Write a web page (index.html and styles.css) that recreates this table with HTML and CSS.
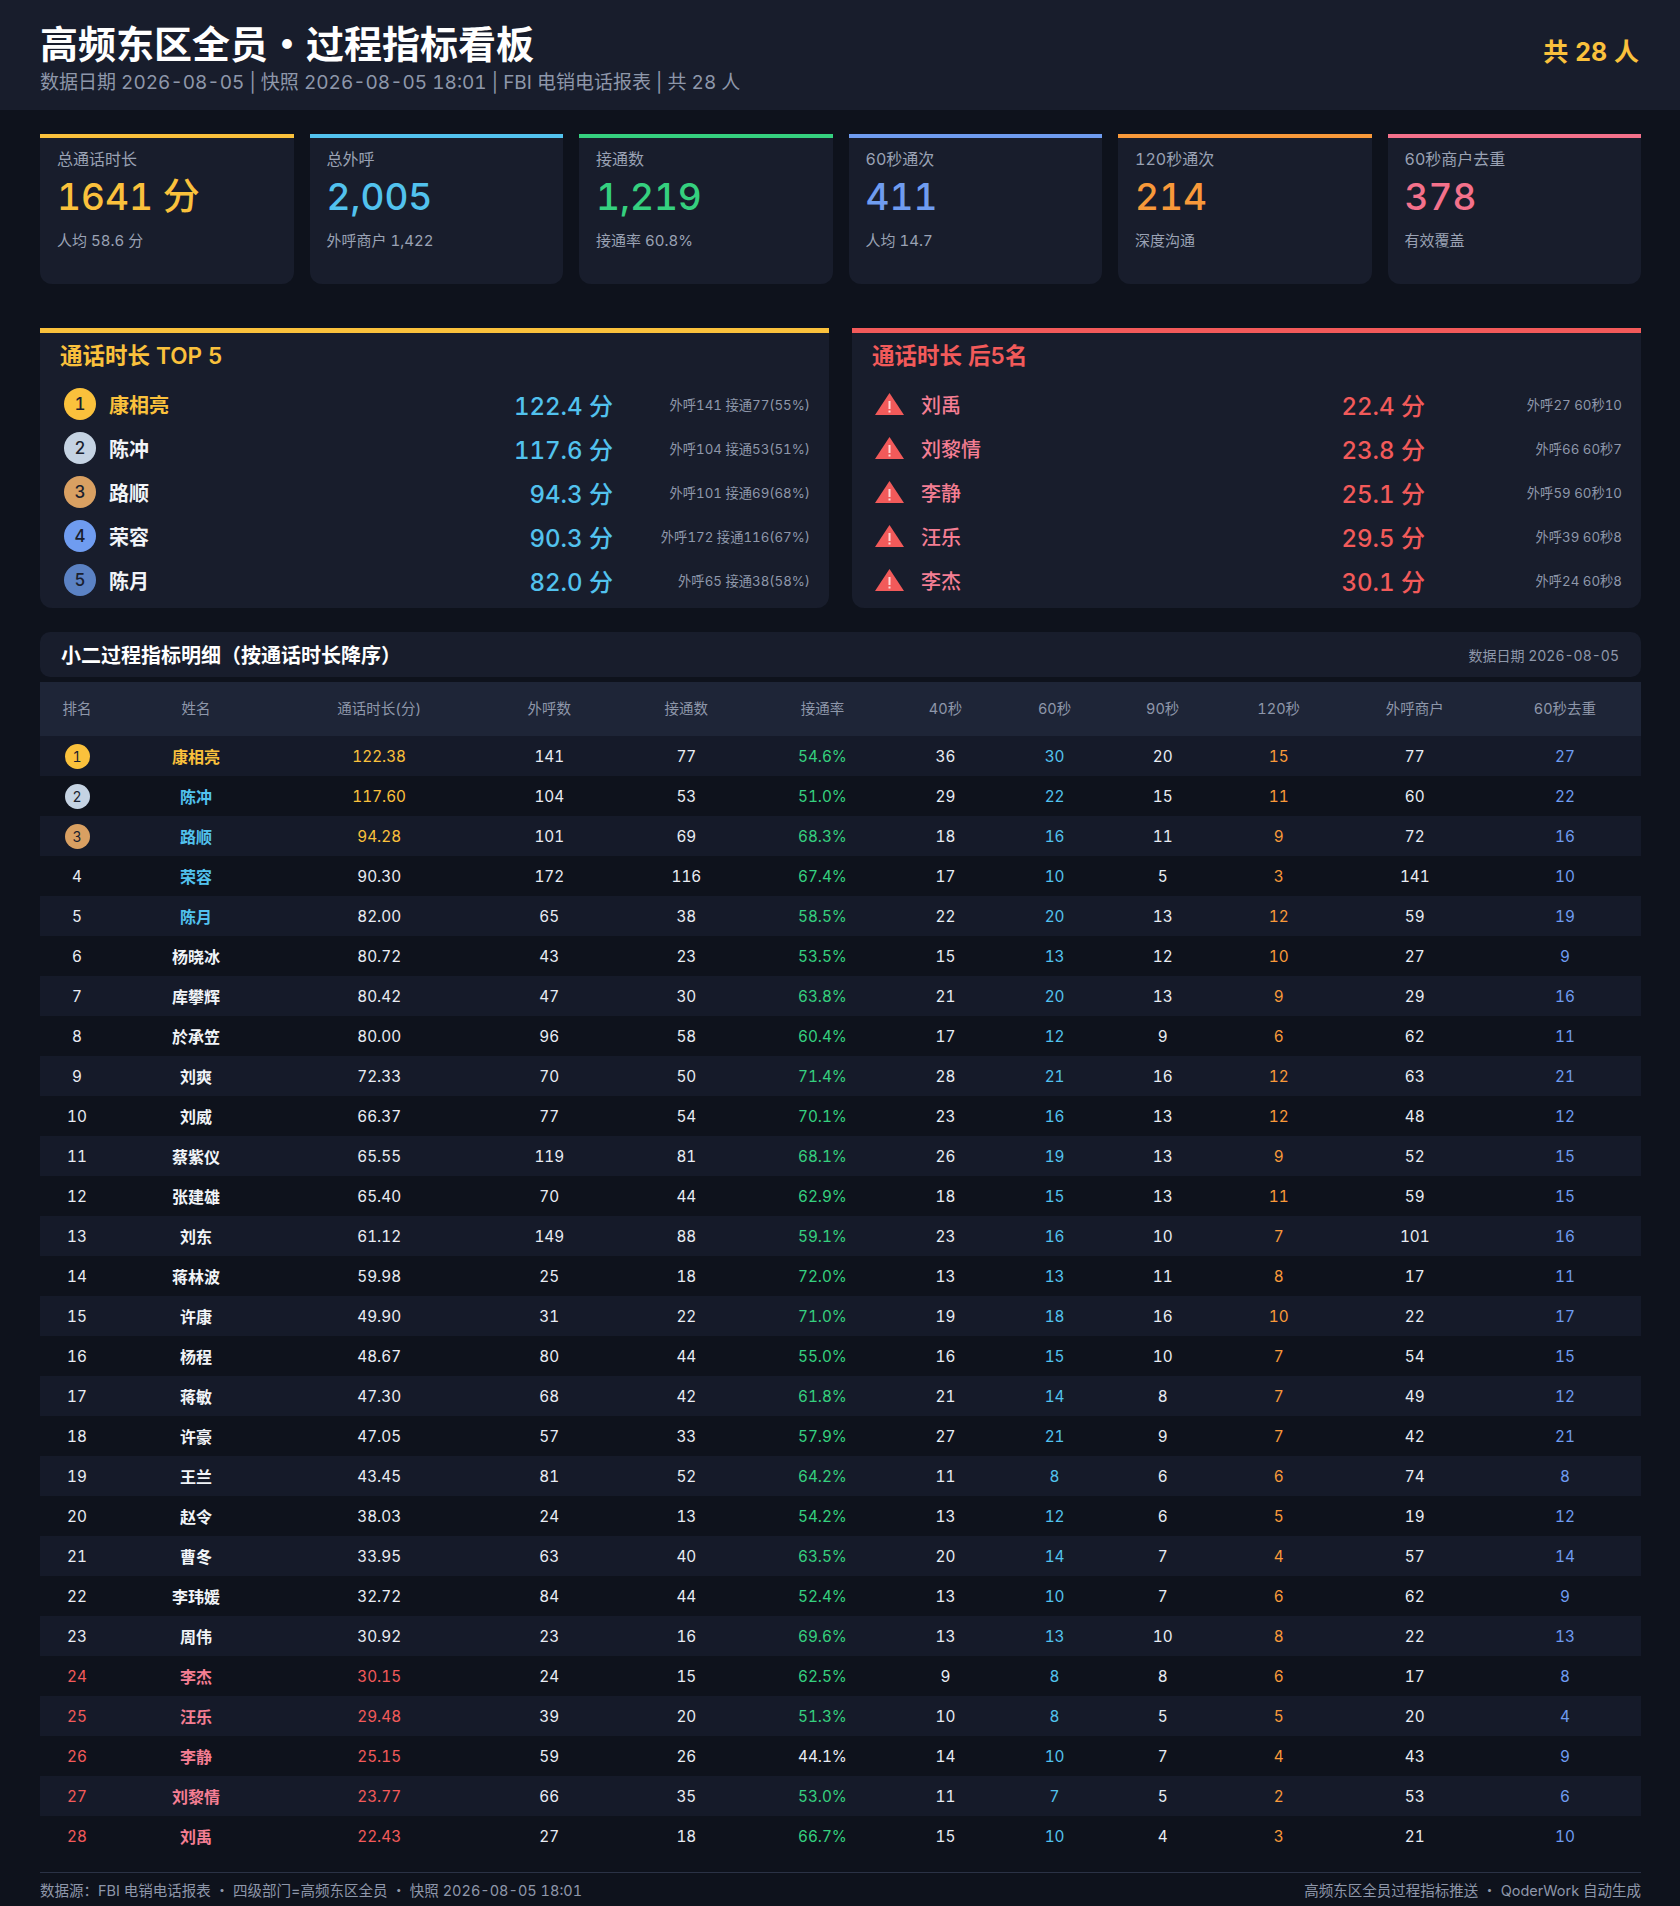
FILE: index.html
```html
<!DOCTYPE html>
<html lang="zh-CN">
<head>
<meta charset="utf-8">
<title>高频东区全员・过程指标看板</title>
<link rel="stylesheet" href="styles.css">
</head>
<body>
<header class="top">
  <div class="top-left">
    <h1 class="title">高频东区全员・过程指标看板</h1>
    <div class="subtitle">数据日期 2026-08-05 | 快照 2026-08-05 18:01 | FBI 电销电话报表 | 共 28 人</div>
  </div>
  <div class="total">共 28 人</div>
</header>

<main class="main">
  <section class="kpis">
    <div class="kpi k-yellow"><div class="kpi-label">总通话时长</div><div class="kpi-value">1641 分</div><div class="kpi-sub">人均 58.6 分</div></div>
    <div class="kpi k-sky"><div class="kpi-label">总外呼</div><div class="kpi-value">2,005</div><div class="kpi-sub">外呼商户 1,422</div></div>
    <div class="kpi k-green"><div class="kpi-label">接通数</div><div class="kpi-value">1,219</div><div class="kpi-sub">接通率 60.8%</div></div>
    <div class="kpi k-blue"><div class="kpi-label">60秒通次</div><div class="kpi-value">411</div><div class="kpi-sub">人均 14.7</div></div>
    <div class="kpi k-orange"><div class="kpi-label">120秒通次</div><div class="kpi-value">214</div><div class="kpi-sub">深度沟通</div></div>
    <div class="kpi k-pink"><div class="kpi-label">60秒商户去重</div><div class="kpi-value">378</div><div class="kpi-sub">有效覆盖</div></div>
  </section>

  <section class="panels">
    <div class="panel panel-top">
      <h2 class="panel-title">通话时长 TOP 5</h2>
      <div class="prow"><span class="medal m1">1</span><span class="pname gold">康相亮</span><span class="pval">122.4 分</span><span class="pdet">外呼141 接通77(55%)</span></div>
      <div class="prow"><span class="medal m2">2</span><span class="pname">陈冲</span><span class="pval">117.6 分</span><span class="pdet">外呼104 接通53(51%)</span></div>
      <div class="prow"><span class="medal m3">3</span><span class="pname">路顺</span><span class="pval">94.3 分</span><span class="pdet">外呼101 接通69(68%)</span></div>
      <div class="prow"><span class="medal m4">4</span><span class="pname">荣容</span><span class="pval">90.3 分</span><span class="pdet">外呼172 接通116(67%)</span></div>
      <div class="prow"><span class="medal m5">5</span><span class="pname">陈月</span><span class="pval">82.0 分</span><span class="pdet">外呼65 接通38(58%)</span></div>
    </div>
    <div class="panel panel-bottom">
      <h2 class="panel-title">通话时长 后5名</h2>
      <div class="prow"><svg class="warn" viewBox="0 0 29 22"><polygon points="14.5,0 29,22 0,22" fill="#f25a5a"/><rect x="13.5" y="8" width="2" height="8" fill="#ffd9d9"/><rect x="13.5" y="17.5" width="2" height="2" fill="#ffd9d9"/></svg><span class="pname pink">刘禹</span><span class="pval red">22.4 分</span><span class="pdet">外呼27 60秒10</span></div>
      <div class="prow"><svg class="warn" viewBox="0 0 29 22"><polygon points="14.5,0 29,22 0,22" fill="#f25a5a"/><rect x="13.5" y="8" width="2" height="8" fill="#ffd9d9"/><rect x="13.5" y="17.5" width="2" height="2" fill="#ffd9d9"/></svg><span class="pname pink">刘黎情</span><span class="pval red">23.8 分</span><span class="pdet">外呼66 60秒7</span></div>
      <div class="prow"><svg class="warn" viewBox="0 0 29 22"><polygon points="14.5,0 29,22 0,22" fill="#f25a5a"/><rect x="13.5" y="8" width="2" height="8" fill="#ffd9d9"/><rect x="13.5" y="17.5" width="2" height="2" fill="#ffd9d9"/></svg><span class="pname pink">李静</span><span class="pval red">25.1 分</span><span class="pdet">外呼59 60秒10</span></div>
      <div class="prow"><svg class="warn" viewBox="0 0 29 22"><polygon points="14.5,0 29,22 0,22" fill="#f25a5a"/><rect x="13.5" y="8" width="2" height="8" fill="#ffd9d9"/><rect x="13.5" y="17.5" width="2" height="2" fill="#ffd9d9"/></svg><span class="pname pink">汪乐</span><span class="pval red">29.5 分</span><span class="pdet">外呼39 60秒8</span></div>
      <div class="prow"><svg class="warn" viewBox="0 0 29 22"><polygon points="14.5,0 29,22 0,22" fill="#f25a5a"/><rect x="13.5" y="8" width="2" height="8" fill="#ffd9d9"/><rect x="13.5" y="17.5" width="2" height="2" fill="#ffd9d9"/></svg><span class="pname pink">李杰</span><span class="pval red">30.1 分</span><span class="pdet">外呼24 60秒8</span></div>
    </div>
  </section>

  <section class="detail">
    <div class="detail-head">
      <h2 class="detail-title">小二过程指标明细（按通话时长降序）</h2>
      <span class="detail-date">数据日期 2026-08-05</span>
    </div>
    <table class="grid">
      <colgroup>
        <col class="w-rank"><col class="w-name"><col class="w-dur"><col class="w-out"><col class="w-con"><col class="w-rate"><col class="w-s40"><col class="w-s60"><col class="w-s90"><col class="w-s120"><col class="w-mer"><col class="w-dedup">
      </colgroup>
      <thead>
        <tr><th>排名</th><th>姓名</th><th>通话时长(分)</th><th>外呼数</th><th>接通数</th><th>接通率</th><th>40秒</th><th>60秒</th><th>90秒</th><th>120秒</th><th>外呼商户</th><th>60秒去重</th></tr>
      </thead>
      <tbody>
        <tr><td><span class="badge b1">1</span></td><td class="nm gold">康相亮</td><td class="gold">122.38</td><td>141</td><td>77</td><td class="grn">54.6%</td><td>36</td><td class="sky">30</td><td>20</td><td class="org">15</td><td>77</td><td class="blu">27</td></tr>
        <tr><td><span class="badge b2">2</span></td><td class="nm sky">陈冲</td><td class="gold">117.60</td><td>104</td><td>53</td><td class="grn">51.0%</td><td>29</td><td class="sky">22</td><td>15</td><td class="org">11</td><td>60</td><td class="blu">22</td></tr>
        <tr><td><span class="badge b3">3</span></td><td class="nm sky">路顺</td><td class="gold">94.28</td><td>101</td><td>69</td><td class="grn">68.3%</td><td>18</td><td class="sky">16</td><td>11</td><td class="org">9</td><td>72</td><td class="blu">16</td></tr>
        <tr><td>4</td><td class="nm sky">荣容</td><td>90.30</td><td>172</td><td>116</td><td class="grn">67.4%</td><td>17</td><td class="sky">10</td><td>5</td><td class="org">3</td><td>141</td><td class="blu">10</td></tr>
        <tr><td>5</td><td class="nm sky">陈月</td><td>82.00</td><td>65</td><td>38</td><td class="grn">58.5%</td><td>22</td><td class="sky">20</td><td>13</td><td class="org">12</td><td>59</td><td class="blu">19</td></tr>
        <tr><td>6</td><td class="nm">杨晓冰</td><td>80.72</td><td>43</td><td>23</td><td class="grn">53.5%</td><td>15</td><td class="sky">13</td><td>12</td><td class="org">10</td><td>27</td><td class="blu">9</td></tr>
        <tr><td>7</td><td class="nm">库攀辉</td><td>80.42</td><td>47</td><td>30</td><td class="grn">63.8%</td><td>21</td><td class="sky">20</td><td>13</td><td class="org">9</td><td>29</td><td class="blu">16</td></tr>
        <tr><td>8</td><td class="nm">於承笠</td><td>80.00</td><td>96</td><td>58</td><td class="grn">60.4%</td><td>17</td><td class="sky">12</td><td>9</td><td class="org">6</td><td>62</td><td class="blu">11</td></tr>
        <tr><td>9</td><td class="nm">刘爽</td><td>72.33</td><td>70</td><td>50</td><td class="grn">71.4%</td><td>28</td><td class="sky">21</td><td>16</td><td class="org">12</td><td>63</td><td class="blu">21</td></tr>
        <tr><td>10</td><td class="nm">刘威</td><td>66.37</td><td>77</td><td>54</td><td class="grn">70.1%</td><td>23</td><td class="sky">16</td><td>13</td><td class="org">12</td><td>48</td><td class="blu">12</td></tr>
        <tr><td>11</td><td class="nm">蔡紫仪</td><td>65.55</td><td>119</td><td>81</td><td class="grn">68.1%</td><td>26</td><td class="sky">19</td><td>13</td><td class="org">9</td><td>52</td><td class="blu">15</td></tr>
        <tr><td>12</td><td class="nm">张建雄</td><td>65.40</td><td>70</td><td>44</td><td class="grn">62.9%</td><td>18</td><td class="sky">15</td><td>13</td><td class="org">11</td><td>59</td><td class="blu">15</td></tr>
        <tr><td>13</td><td class="nm">刘东</td><td>61.12</td><td>149</td><td>88</td><td class="grn">59.1%</td><td>23</td><td class="sky">16</td><td>10</td><td class="org">7</td><td>101</td><td class="blu">16</td></tr>
        <tr><td>14</td><td class="nm">蒋林波</td><td>59.98</td><td>25</td><td>18</td><td class="grn">72.0%</td><td>13</td><td class="sky">13</td><td>11</td><td class="org">8</td><td>17</td><td class="blu">11</td></tr>
        <tr><td>15</td><td class="nm">许康</td><td>49.90</td><td>31</td><td>22</td><td class="grn">71.0%</td><td>19</td><td class="sky">18</td><td>16</td><td class="org">10</td><td>22</td><td class="blu">17</td></tr>
        <tr><td>16</td><td class="nm">杨程</td><td>48.67</td><td>80</td><td>44</td><td class="grn">55.0%</td><td>16</td><td class="sky">15</td><td>10</td><td class="org">7</td><td>54</td><td class="blu">15</td></tr>
        <tr><td>17</td><td class="nm">蒋敏</td><td>47.30</td><td>68</td><td>42</td><td class="grn">61.8%</td><td>21</td><td class="sky">14</td><td>8</td><td class="org">7</td><td>49</td><td class="blu">12</td></tr>
        <tr><td>18</td><td class="nm">许豪</td><td>47.05</td><td>57</td><td>33</td><td class="grn">57.9%</td><td>27</td><td class="sky">21</td><td>9</td><td class="org">7</td><td>42</td><td class="blu">21</td></tr>
        <tr><td>19</td><td class="nm">王兰</td><td>43.45</td><td>81</td><td>52</td><td class="grn">64.2%</td><td>11</td><td class="sky">8</td><td>6</td><td class="org">6</td><td>74</td><td class="blu">8</td></tr>
        <tr><td>20</td><td class="nm">赵令</td><td>38.03</td><td>24</td><td>13</td><td class="grn">54.2%</td><td>13</td><td class="sky">12</td><td>6</td><td class="org">5</td><td>19</td><td class="blu">12</td></tr>
        <tr><td>21</td><td class="nm">曹冬</td><td>33.95</td><td>63</td><td>40</td><td class="grn">63.5%</td><td>20</td><td class="sky">14</td><td>7</td><td class="org">4</td><td>57</td><td class="blu">14</td></tr>
        <tr><td>22</td><td class="nm">李玮媛</td><td>32.72</td><td>84</td><td>44</td><td class="grn">52.4%</td><td>13</td><td class="sky">10</td><td>7</td><td class="org">6</td><td>62</td><td class="blu">9</td></tr>
        <tr><td>23</td><td class="nm">周伟</td><td>30.92</td><td>23</td><td>16</td><td class="grn">69.6%</td><td>13</td><td class="sky">13</td><td>10</td><td class="org">8</td><td>22</td><td class="blu">13</td></tr>
        <tr><td class="red">24</td><td class="nm pink">李杰</td><td class="red">30.15</td><td>24</td><td>15</td><td class="grn">62.5%</td><td>9</td><td class="sky">8</td><td>8</td><td class="org">6</td><td>17</td><td class="blu">8</td></tr>
        <tr><td class="red">25</td><td class="nm pink">汪乐</td><td class="red">29.48</td><td>39</td><td>20</td><td class="grn">51.3%</td><td>10</td><td class="sky">8</td><td>5</td><td class="org">5</td><td>20</td><td class="blu">4</td></tr>
        <tr><td class="red">26</td><td class="nm pink">李静</td><td class="red">25.15</td><td>59</td><td>26</td><td>44.1%</td><td>14</td><td class="sky">10</td><td>7</td><td class="org">4</td><td>43</td><td class="blu">9</td></tr>
        <tr><td class="red">27</td><td class="nm pink">刘黎情</td><td class="red">23.77</td><td>66</td><td>35</td><td class="grn">53.0%</td><td>11</td><td class="sky">7</td><td>5</td><td class="org">2</td><td>53</td><td class="blu">6</td></tr>
        <tr><td class="red">28</td><td class="nm pink">刘禹</td><td class="red">22.43</td><td>27</td><td>18</td><td class="grn">66.7%</td><td>15</td><td class="sky">10</td><td>4</td><td class="org">3</td><td>21</td><td class="blu">10</td></tr>
      </tbody>
    </table>
  </section>

  <footer class="foot">
    <span>数据源：FBI 电销电话报表 ・ 四级部门=高频东区全员 ・ 快照 2026-08-05 18:01</span>
    <span>高频东区全员过程指标推送 ・ QoderWork 自动生成</span>
  </footer>
</main>
</body>
</html>
```
FILE: styles.css
```css
* { box-sizing: border-box; }
html, body { margin: 0; padding: 0; }
body {
  background: #0e121c;
  color: #e8ecf3;
  font-family: "Inter", "Noto Sans CJK SC", sans-serif;
  font-variant-numeric: tabular-nums;
  width: 1680px;
}
h1, h2 { margin: 0; }

/* header */
.top {
  height: 110px;
  background: #181d2c;
  padding: 20px 41px 0 40px;
  display: flex;
  justify-content: space-between;
  align-items: flex-start;
}
.title {
  font-size: 38px;
  line-height: 48px;
  font-weight: 700;
  color: #ffffff;
}
.subtitle {
  margin-top: 2px;
  font-size: 19px;
  line-height: 26px;
  color: #8e97aa;
}
.total {
  margin-top: 2px;
  font-size: 25px;
  line-height: 60px;
  font-weight: 700;
  color: #fac13c;
}

.main { padding: 24px 39px 0 40px; }

/* KPI cards */
.kpis {
  display: grid;
  grid-template-columns: repeat(6, 1fr);
  gap: 16px;
}
.kpi {
  height: 150px;
  background: #181d2c;
  border-top: 4px solid;
  border-radius: 0 0 12px 12px;
  padding: 10px 16px 0 17px;
}
.kpi-label { font-size: 16px; line-height: 22px; color: #9aa2b4; }
.kpi-value { margin-top: 5px; font-size: 37px; line-height: 44px; font-weight: 500; }
.kpi-sub { margin-top: 12px; font-size: 15px; line-height: 20px; color: #9aa2b4; }
.k-yellow { border-color: #fac13c; } .k-yellow .kpi-value { color: #fac13c; }
.k-sky { border-color: #52c2ee; } .k-sky .kpi-value { color: #52c2ee; }
.k-green { border-color: #35d07f; } .k-green .kpi-value { color: #35d07f; }
.k-blue { border-color: #6f9cf0; } .k-blue .kpi-value { color: #6f9cf0; }
.k-orange { border-color: #f8993a; } .k-orange .kpi-value { color: #f8993a; }
.k-pink { border-color: #f4718b; } .k-pink .kpi-value { color: #f4718b; }

/* panels */
.panels {
  margin-top: 44px;
  display: grid;
  grid-template-columns: 1fr 1fr;
  gap: 23px;
}
.panel {
  background: #181d2c;
  border-top: 5px solid;
  border-radius: 0 0 12px 12px;
  height: 280px;
  padding: 8px 19px 0 24px;
}
.panel-top { border-color: #fac13c; }
.panel-bottom { border-color: #f25a5a; padding-left: 23px; }
.panel-title {
  font-size: 22.5px;
  line-height: 30px;
  font-weight: 600;
  margin-left: -4px;
  margin-bottom: 11px;
}
.panel-top .panel-title { color: #fac13c; }
.panel-bottom .panel-title { color: #f25a5a; margin-left: -3px; }
.prow {
  height: 44px;
  display: grid;
  grid-template-columns: 32px 1fr auto 184px;
  align-items: center;
  column-gap: 13px;
}
.panel-bottom .prow { grid-template-columns: 29px 1fr auto 180px; column-gap: 17px; }
.medal {
  width: 32px; height: 32px; border-radius: 50%;
  display: flex; align-items: center; justify-content: center;
  font-size: 17px; color: #1a1f2e; font-weight: 500;
}
.m1 { background: #fac13c; }
.m2 { background: #c5d3e3; }
.m3 { background: #d9a062; }
.m4 { background: #6f9cf0; }
.m5 { background: #5b82c4; }
.warn { width: 29px; height: 22px; display: block; }
.pname { font-size: 20px; font-weight: 600; color: #f1f4f8; }
.pname.gold { color: #fac13c; }
.pname.pink { color: #f47e93; font-weight: 500; }
.pval { font-size: 24px; font-weight: 500; color: #52c2ee; text-align: right; }
.pval.red { color: #f25a5a; }
.pdet { font-size: 13.3px; color: #8e97aa; text-align: right; }

/* detail table */
.detail { margin-top: 24px; }
.detail-head {
  height: 45px;
  background: #181d2c;
  border-radius: 10px;
  display: flex;
  justify-content: space-between;
  align-items: center;
  padding: 0 22px 0 21px;
}
.detail-title { font-size: 20px; font-weight: 700; color: #ffffff; }
.detail-date { font-size: 14px; color: #8e97aa; }
.grid {
  margin-top: 5px;
  width: 100%;
  border-collapse: collapse;
  table-layout: fixed;
}
.w-rank { width: 74px; } .w-name { width: 164px; } .w-dur { width: 202px; }
.w-out { width: 138px; } .w-con { width: 136px; } .w-rate { width: 136px; }
.w-s40 { width: 110px; } .w-s60 { width: 108px; } .w-s90 { width: 108px; }
.w-s120 { width: 124px; } .w-mer { width: 148px; } .w-dedup { width: 152px; }
.grid th {
  height: 54px;
  background: #1e2537;
  color: #8e97aa;
  font-weight: 400;
  font-size: 14.5px;
  text-align: center;
  padding: 0 0 3px;
}
.grid td {
  height: 40px;
  padding: 0;
  text-align: center;
  font-size: 15.3px;
  color: #e8ecf3;
}
.grid tbody tr:nth-child(odd) td { background: #151a29; }
.grid td.nm { font-weight: 600; color: #f1f4f8; font-size: 16px; }
.grid td.gold { color: #fac13c; }
.grid td.sky { color: #52c2ee; }
.grid td.grn { color: #35d07f; }
.grid td.org { color: #f8993a; }
.grid td.blu { color: #6f9cf0; }
.grid td.red { color: #f25a5a; }
.grid td.pink { color: #f47e93; }
.badge {
  display: inline-flex; width: 25px; height: 25px; border-radius: 50%;
  align-items: center; justify-content: center;
  font-size: 14px; color: #1a1f2e; vertical-align: middle;
}
.b1 { background: #fac13c; }
.b2 { background: #c5d3e3; }
.b3 { background: #d9a062; }

/* footer */
.foot {
  margin-top: 16px;
  border-top: 1px solid #2a3245;
  display: flex;
  justify-content: space-between;
  padding-top: 8px;
  font-size: 14.5px;
  line-height: 20px;
  color: #8e97aa;
}
```
